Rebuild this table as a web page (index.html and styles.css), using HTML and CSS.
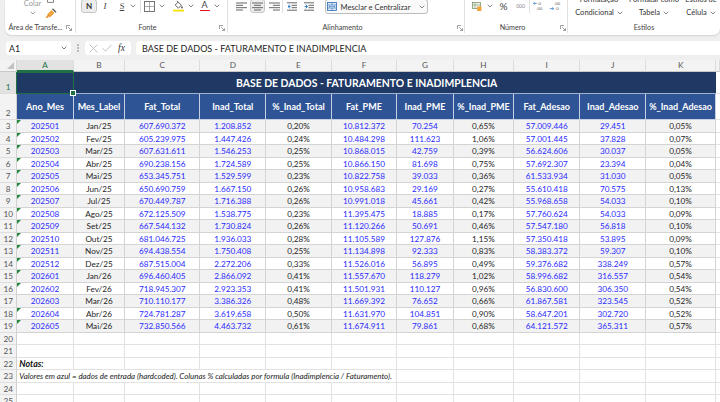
FILE: index.html
```html
<!DOCTYPE html>
<html lang="pt-BR">
<head>
<meta charset="utf-8">
<title>Base de Dados</title>
<link rel="stylesheet" href="styles.css">
</head>
<body>
<div class="app">
  <div class="ribbon">
    <div class="grp g-clip">
      <div class="top">
        <div class="paste ml21"><span class="paste-txt">Colar</span><svg class="chev pchev" viewBox="0 0 6 4" width="6" height="4"><path d="M.7 .7 3 3 5.3 .7" fill="none" stroke="#888" stroke-width=".8"/></svg></div>
        <div class="cliptools ml6">
          <svg width="10" height="3" viewBox="0 0 10 3"><path d="M1.5 0V2.4H7.5V0" fill="none" stroke="#666" stroke-width=".8"/></svg>
          <svg class="brush" width="12" height="11" viewBox="0 0 12 11"><path d="M7.5 .8 11 4.3" stroke="#555" stroke-width="1.3"/><path d="M3 5.5 6.6 2 9.5 4.9 6 8.4Z" fill="#f2a23a"/><path d="M3 5.5 .6 10.2 6 8.4Z" fill="#e68a1e"/><path d="M2.5 7.5 4 9" stroke="#fff" stroke-width=".5"/></svg>
        </div>
      </div>
      <div class="lbl-row"><span class="lbl">Área de Transfe...</span><svg class="launch mr3" viewBox="0 0 6 6" width="6" height="6"><path d="M.5 4V.5H4" fill="none" stroke="#777" stroke-width=".7"/><path d="M2.2 2.2 5.5 5.5M5.5 3.2V5.5H3.2" fill="none" stroke="#777" stroke-width=".7"/></svg></div>
    </div>

    <div class="grp g-font">
      <div class="top">
        <div class="it btn-n ml5">N</div>
        <div class="it w10 ml3 t-i">I</div>
        <div class="it w10 ml7 t-s">S</div>
        <div class="it w8 ml2"><svg class="chev" viewBox="0 0 6 4" width="6" height="4"><path d="M.7 .7 3 3 5.3 .7" fill="none" stroke="#666" stroke-width=".8"/></svg></div>
        <div class="it w7"><span class="vsep"></span></div>
        <div class="it w11"><svg width="11" height="11" viewBox="0 0 11 11"><rect x=".5" y=".5" width="10" height="10" fill="none" stroke="#666" stroke-width=".9"/><path d="M5.5 .5V10.5M.5 5.5H10.5" stroke="#888" stroke-width=".7"/></svg></div>
        <div class="it w8 ml3"><svg class="chev" viewBox="0 0 6 4" width="6" height="4"><path d="M.7 .7 3 3 5.3 .7" fill="none" stroke="#666" stroke-width=".8"/></svg></div>
        <div class="it w11 ml7"><svg width="11" height="12" viewBox="0 0 11 12"><path d="M2.2 5 5.2 2 8.4 5.2 5.4 8.2Z" fill="none" stroke="#555" stroke-width=".9"/><path d="M3.8 .8 5.4 2.4" stroke="#555" stroke-width=".9"/><path d="M9 5.8c.6 1 .9 1.4.9 1.8a.9.9 0 0 1-1.8 0c0-.4.3-.8.9-1.8z" fill="#555"/><rect x="0" y="9.7" width="11" height="1.8" fill="#f3e100"/></svg></div>
        <div class="it w8 ml3"><svg class="chev" viewBox="0 0 6 4" width="6" height="4"><path d="M.7 .7 3 3 5.3 .7" fill="none" stroke="#666" stroke-width=".8"/></svg></div>
        <div class="it w11 ml4 fcol"><span class="fa">A</span><span class="bar"></span></div>
        <div class="it w8 ml3"><svg class="chev" viewBox="0 0 6 4" width="6" height="4"><path d="M.7 .7 3 3 5.3 .7" fill="none" stroke="#666" stroke-width=".8"/></svg></div>
      </div>
      <div class="lbl-row"><span class="lbl">Fonte</span><svg class="launch mr2" viewBox="0 0 6 6" width="6" height="6"><path d="M.5 4V.5H4" fill="none" stroke="#777" stroke-width=".7"/><path d="M2.2 2.2 5.5 5.5M5.5 3.2V5.5H3.2" fill="none" stroke="#777" stroke-width=".7"/></svg></div>
    </div>

    <div class="grp g-align">
      <div class="top">
        <div class="it w11 ml8"><svg width="11" height="9" viewBox="0 0 11 9"><path d="M0 1H11M0 3.3H7M0 5.7H11M0 8H7" stroke="#555" stroke-width=".9"/></svg></div>
        <div class="it btn-c ml3"><svg width="11" height="9" viewBox="0 0 11 9"><path d="M0 1H11M2 3.3H9M0 5.7H11M2 8H9" stroke="#555" stroke-width=".9"/></svg></div>
        <div class="it w11 ml4"><svg width="11" height="9" viewBox="0 0 11 9"><path d="M0 1H11M4 3.3H11M0 5.7H11M4 8H11" stroke="#555" stroke-width=".9"/></svg></div>
        <div class="it w5"><span class="vsep"></span></div>
        <div class="it w10 ml2"><svg width="10" height="9" viewBox="0 0 10 9"><path d="M0 .8H10M4.5 3.3H10M4.5 5.7H10M0 8.2H10" stroke="#555" stroke-width=".9"/><path d="M3 2.6 1 4.5 3 6.4M1 4.5H3.6" fill="none" stroke="#1a73c8" stroke-width=".9"/></svg></div>
        <div class="it w10 ml7"><svg width="10" height="9" viewBox="0 0 10 9"><path d="M0 .8H10M4.5 3.3H10M4.5 5.7H10M0 8.2H10" stroke="#555" stroke-width=".9"/><path d="M1.6 2.6 3.6 4.5 1.6 6.4M.6 4.5H3.4" fill="none" stroke="#1a73c8" stroke-width=".9"/></svg></div>
        <div class="merge ml11">
          <svg width="10" height="9" viewBox="0 0 10 9"><rect x=".5" y=".5" width="9" height="8" fill="#dceaf8" stroke="#2f6fb5" stroke-width=".8"/><path d="M.5 3H9.5M.5 6H9.5M5 .5V3M5 6V8.5" stroke="#2f6fb5" stroke-width=".6"/><path d="M2 4.5H8M3 3.7 2 4.5 3 5.3M7 3.7 8 4.5 7 5.3" fill="none" stroke="#2f6fb5" stroke-width=".5"/></svg>
          <span class="merge-txt">Mesclar e Centralizar</span>
          <svg class="chev mchev" viewBox="0 0 6 4" width="6" height="4"><path d="M.7 .7 3 3 5.3 .7" fill="none" stroke="#666" stroke-width=".8"/></svg>
        </div>
      </div>
      <div class="lbl-row"><span class="lbl">Alinhamento</span><svg class="launch mr1" viewBox="0 0 6 6" width="6" height="6"><path d="M.5 4V.5H4" fill="none" stroke="#777" stroke-width=".7"/><path d="M2.2 2.2 5.5 5.5M5.5 3.2V5.5H3.2" fill="none" stroke="#777" stroke-width=".7"/></svg></div>
    </div>

    <div class="grp g-num">
      <div class="top">
        <div class="it w10 ml7"><svg width="10" height="9" viewBox="0 0 10 9"><rect x=".5" y=".5" width="8" height="6" fill="#eef2e8" stroke="#6f8a62" stroke-width=".7"/><path d="M.5 3H8.5M3 .5V6.5" stroke="#6f8a62" stroke-width=".5"/><rect x="5" y="4.5" width="4.5" height="4.5" rx=".8" fill="#f2a33a"/></svg></div>
        <div class="it w8 ml4"><svg class="chev" viewBox="0 0 6 4" width="6" height="4"><path d="M.7 .7 3 3 5.3 .7" fill="none" stroke="#666" stroke-width=".8"/></svg></div>
        <div class="it w9 ml5 pct">%</div>
        <div class="it w11 ml7 k000">000</div>
        <div class="it w6"><span class="vsep"></span></div>
        <div class="it w10 ml1"><svg width="10" height="10" viewBox="0 0 10 10"><text x="4.2" y="4" font-size="4.4" fill="#555" font-family="Liberation Sans, sans-serif">.0</text><text x="3" y="9.4" font-size="4.4" fill="#555" font-family="Liberation Sans, sans-serif">.00</text><path d="M3.8 2.4H.6M1.8 1.2.6 2.4 1.8 3.6" stroke="#1a73c8" fill="none" stroke-width=".7"/></svg></div>
        <div class="it w12 ml6"><svg width="12" height="10" viewBox="0 0 12 10"><text x="5" y="4" font-size="4.4" fill="#555" font-family="Liberation Sans, sans-serif">.00</text><text x="6" y="9.4" font-size="4.4" fill="#555" font-family="Liberation Sans, sans-serif">.0</text><path d="M.8 7.6H4.6M3.4 6.4 4.6 7.6 3.4 8.8" stroke="#1a73c8" fill="none" stroke-width=".7"/></svg></div>
      </div>
      <div class="lbl-row"><span class="lbl">Número</span><svg class="launch mr1" viewBox="0 0 6 6" width="6" height="6"><path d="M.5 4V.5H4" fill="none" stroke="#777" stroke-width=".7"/><path d="M2.2 2.2 5.5 5.5M5.5 3.2V5.5H3.2" fill="none" stroke="#777" stroke-width=".7"/></svg></div>
    </div>

    <div class="grp g-sty">
      <div class="top">
        <div class="sty ml7 w48"><div>Formatação</div><div>Condicional <svg class="chev" viewBox="0 0 6 4" width="6" height="4"><path d="M.7 .7 3 3 5.3 .7" fill="none" stroke="#666" stroke-width=".8"/></svg></div></div>
        <div class="sty ml5 w52"><div>Formatar como</div><div>Tabela <svg class="chev" viewBox="0 0 6 4" width="6" height="4"><path d="M.7 .7 3 3 5.3 .7" fill="none" stroke="#666" stroke-width=".8"/></svg></div></div>
        <div class="sty ml3 w36"><div>Estilos de</div><div>Célula <svg class="chev" viewBox="0 0 6 4" width="6" height="4"><path d="M.7 .7 3 3 5.3 .7" fill="none" stroke="#666" stroke-width=".8"/></svg></div></div>
      </div>
      <div class="lbl-row"><span class="lbl">Estilos</span></div>
    </div>
  </div>

  <div class="fbar">
    <div class="namebox"><span>A1</span><svg class="chev" viewBox="0 0 6 4" width="6" height="4"><path d="M.7 .7 3 3 5.3 .7" fill="none" stroke="#555" stroke-width=".8"/></svg></div>
    <div class="dots"><svg width="2" height="8" viewBox="0 0 2 8"><circle cx="1" cy="1" r=".8" fill="#777"/><circle cx="1" cy="4" r=".8" fill="#777"/><circle cx="1" cy="7" r=".8" fill="#777"/></svg></div>
    <div class="fxbox">
      <svg class="fx-x" width="9" height="9" viewBox="0 0 9 9"><path d="M.5.5 8.5 8.5M8.5.5.5 8.5" stroke="#b4b4b4" stroke-width=".8"/></svg>
      <svg class="fx-ok" width="10" height="8" viewBox="0 0 10 8"><path d="M.5 4.2 3.5 7.2 9.5.7" fill="none" stroke="#b4b4b4" stroke-width=".8"/></svg>
      <span class="fx">fx</span>
    </div>
    <div class="finput">BASE DE DADOS - FATURAMENTO E INADIMPLENCIA</div>
  </div>

  <div class="sheet">
    <div class="r ch">
      <div class="corner"></div>
      <div class="hc sel-col">A</div><div class="hc">B</div><div class="hc">C</div><div class="hc">D</div><div class="hc">E</div><div class="hc">F</div><div class="hc">G</div><div class="hc">H</div><div class="hc">I</div><div class="hc">J</div><div class="hc">K</div><div class="hc"></div>
    </div>
    <div class="r t">
      <div class="rh bot sel-row">1</div>
      <div class="title">BASE DE DADOS - FATURAMENTO E INADIMPLENCIA<span class="sel"></span></div>
      <div class="c x"></div>
    </div>
    <div class="r h">
      <div class="rh bot">2</div>
      <div class="hd">Ano_Mes</div><div class="hd">Mes_Label</div><div class="hd">Fat_Total</div><div class="hd">Inad_Total</div><div class="hd">%_Inad_Total</div><div class="hd">Fat_PME</div><div class="hd">Inad_PME</div><div class="hd">%_Inad_PME</div><div class="hd">Fat_Adesao</div><div class="hd">Inad_Adesao</div><div class="hd">%_Inad_Adesao</div>
      <div class="c x"></div>
    </div>

    <div class="r d alt"><div class="rh">3</div><div class="c b m">202501</div><div class="c">Jan/25</div><div class="c b">607.690.372</div><div class="c b">1.208.852</div><div class="c">0,20%</div><div class="c b">10.812.372</div><div class="c b">70.254</div><div class="c">0,65%</div><div class="c b">57.009.446</div><div class="c b">29.451</div><div class="c">0,05%</div><div class="c x"></div></div>
    <div class="r d"><div class="rh">4</div><div class="c b m">202502</div><div class="c">Fev/25</div><div class="c b">605.239.975</div><div class="c b">1.447.426</div><div class="c">0,24%</div><div class="c b">10.484.298</div><div class="c b">111.623</div><div class="c">1,06%</div><div class="c b">57.001.445</div><div class="c b">37.828</div><div class="c">0,07%</div><div class="c x"></div></div>
    <div class="r d alt"><div class="rh">5</div><div class="c b m">202503</div><div class="c">Mar/25</div><div class="c b">607.631.611</div><div class="c b">1.546.253</div><div class="c">0,25%</div><div class="c b">10.868.015</div><div class="c b">42.759</div><div class="c">0,39%</div><div class="c b">56.624.606</div><div class="c b">30.037</div><div class="c">0,05%</div><div class="c x"></div></div>
    <div class="r d"><div class="rh">6</div><div class="c b m">202504</div><div class="c">Abr/25</div><div class="c b">690.238.156</div><div class="c b">1.724.589</div><div class="c">0,25%</div><div class="c b">10.866.150</div><div class="c b">81.698</div><div class="c">0,75%</div><div class="c b">57.692.307</div><div class="c b">23.394</div><div class="c">0,04%</div><div class="c x"></div></div>
    <div class="r d alt"><div class="rh">7</div><div class="c b m">202505</div><div class="c">Mai/25</div><div class="c b">653.345.751</div><div class="c b">1.529.599</div><div class="c">0,23%</div><div class="c b">10.822.758</div><div class="c b">39.033</div><div class="c">0,36%</div><div class="c b">61.533.934</div><div class="c b">31.030</div><div class="c">0,05%</div><div class="c x"></div></div>
    <div class="r d"><div class="rh">8</div><div class="c b m">202506</div><div class="c">Jun/25</div><div class="c b">650.690.759</div><div class="c b">1.667.150</div><div class="c">0,26%</div><div class="c b">10.958.683</div><div class="c b">29.169</div><div class="c">0,27%</div><div class="c b">55.610.418</div><div class="c b">70.575</div><div class="c">0,13%</div><div class="c x"></div></div>
    <div class="r d alt"><div class="rh">9</div><div class="c b m">202507</div><div class="c">Jul/25</div><div class="c b">670.449.787</div><div class="c b">1.716.388</div><div class="c">0,26%</div><div class="c b">10.991.018</div><div class="c b">45.661</div><div class="c">0,42%</div><div class="c b">55.968.658</div><div class="c b">54.033</div><div class="c">0,10%</div><div class="c x"></div></div>
    <div class="r d"><div class="rh">10</div><div class="c b m">202508</div><div class="c">Ago/25</div><div class="c b">672.125.509</div><div class="c b">1.538.775</div><div class="c">0,23%</div><div class="c b">11.395.475</div><div class="c b">18.885</div><div class="c">0,17%</div><div class="c b">57.760.624</div><div class="c b">54.033</div><div class="c">0,09%</div><div class="c x"></div></div>
    <div class="r d alt"><div class="rh">11</div><div class="c b m">202509</div><div class="c">Set/25</div><div class="c b">667.544.132</div><div class="c b">1.730.824</div><div class="c">0,26%</div><div class="c b">11.120.266</div><div class="c b">50.691</div><div class="c">0,46%</div><div class="c b">57.547.180</div><div class="c b">56.818</div><div class="c">0,10%</div><div class="c x"></div></div>
    <div class="r d"><div class="rh">12</div><div class="c b m">202510</div><div class="c">Out/25</div><div class="c b">681.046.725</div><div class="c b">1.936.033</div><div class="c">0,28%</div><div class="c b">11.105.589</div><div class="c b">127.876</div><div class="c">1,15%</div><div class="c b">57.350.418</div><div class="c b">53.895</div><div class="c">0,09%</div><div class="c x"></div></div>
    <div class="r d alt"><div class="rh">13</div><div class="c b m">202511</div><div class="c">Nov/25</div><div class="c b">694.438.554</div><div class="c b">1.750.408</div><div class="c">0,25%</div><div class="c b">11.134.898</div><div class="c b">92.333</div><div class="c">0,83%</div><div class="c b">58.383.372</div><div class="c b">59.307</div><div class="c">0,10%</div><div class="c x"></div></div>
    <div class="r d"><div class="rh">14</div><div class="c b m">202512</div><div class="c">Dez/25</div><div class="c b">687.515.004</div><div class="c b">2.272.206</div><div class="c">0,33%</div><div class="c b">11.526.016</div><div class="c b">56.895</div><div class="c">0,49%</div><div class="c b">59.376.682</div><div class="c b">338.249</div><div class="c">0,57%</div><div class="c x"></div></div>
    <div class="r d alt"><div class="rh">15</div><div class="c b m">202601</div><div class="c">Jan/26</div><div class="c b">696.460.405</div><div class="c b">2.866.092</div><div class="c">0,41%</div><div class="c b">11.557.670</div><div class="c b">118.279</div><div class="c">1,02%</div><div class="c b">58.996.682</div><div class="c b">316.557</div><div class="c">0,54%</div><div class="c x"></div></div>
    <div class="r d"><div class="rh">16</div><div class="c b m">202602</div><div class="c">Fev/26</div><div class="c b">718.945.307</div><div class="c b">2.923.353</div><div class="c">0,41%</div><div class="c b">11.501.931</div><div class="c b">110.127</div><div class="c">0,96%</div><div class="c b">56.830.600</div><div class="c b">306.350</div><div class="c">0,54%</div><div class="c x"></div></div>
    <div class="r d alt"><div class="rh">17</div><div class="c b">202603</div><div class="c">Mar/26</div><div class="c b">710.110.177</div><div class="c b">3.386.326</div><div class="c">0,48%</div><div class="c b">11.669.392</div><div class="c b">76.652</div><div class="c">0,66%</div><div class="c b">61.867.581</div><div class="c b">323.545</div><div class="c">0,52%</div><div class="c x"></div></div>
    <div class="r d"><div class="rh">18</div><div class="c b m">202604</div><div class="c">Abr/26</div><div class="c b">724.781.287</div><div class="c b">3.619.658</div><div class="c">0,50%</div><div class="c b">11.631.970</div><div class="c b">104.851</div><div class="c">0,90%</div><div class="c b">58.647.201</div><div class="c b">302.720</div><div class="c">0,52%</div><div class="c x"></div></div>
    <div class="r d alt"><div class="rh">19</div><div class="c b m">202605</div><div class="c">Mai/26</div><div class="c b">732.850.566</div><div class="c b">4.463.732</div><div class="c">0,61%</div><div class="c b">11.674.911</div><div class="c b">79.861</div><div class="c">0,68%</div><div class="c b">64.121.572</div><div class="c b">365.311</div><div class="c">0,57%</div><div class="c x"></div></div>

    <div class="r e"><div class="rh">20</div><div class="c"></div><div class="c"></div><div class="c"></div><div class="c"></div><div class="c"></div><div class="c"></div><div class="c"></div><div class="c"></div><div class="c"></div><div class="c"></div><div class="c"></div><div class="c x"></div></div>
    <div class="r e"><div class="rh">21</div><div class="c"></div><div class="c"></div><div class="c"></div><div class="c"></div><div class="c"></div><div class="c"></div><div class="c"></div><div class="c"></div><div class="c"></div><div class="c"></div><div class="c"></div><div class="c x"></div></div>
    <div class="r e"><div class="rh">22</div><div class="c note-h">Notas:</div><div class="c"></div><div class="c"></div><div class="c"></div><div class="c"></div><div class="c"></div><div class="c"></div><div class="c"></div><div class="c"></div><div class="c"></div><div class="c"></div><div class="c x"></div></div>
    <div class="r e"><div class="rh">23</div><div class="c note">Valores em azul = dados de entrada (hardcoded). Colunas % calculadas por formula (Inadimplencia / Faturamento).</div><div class="c"></div><div class="c"></div><div class="c"></div><div class="c"></div><div class="c"></div><div class="c x"></div></div>
    <div class="r e"><div class="rh">24</div><div class="c"></div><div class="c"></div><div class="c"></div><div class="c"></div><div class="c"></div><div class="c"></div><div class="c"></div><div class="c"></div><div class="c"></div><div class="c"></div><div class="c"></div><div class="c x"></div></div>
    <div class="r e"><div class="rh">25</div><div class="c"></div><div class="c"></div><div class="c"></div><div class="c"></div><div class="c"></div><div class="c"></div><div class="c"></div><div class="c"></div><div class="c"></div><div class="c"></div><div class="c"></div><div class="c x"></div></div>
  </div>
</div>
</body>
</html>
```

FILE: styles.css
```css
* { box-sizing: border-box; }
html, body { margin: 0; padding: 0; }
body {
  width: 720px;
  height: 402px;
  overflow: hidden;
  background: #efefef;
  font-family: Lato, "Liberation Sans", sans-serif;
  color: #262626;
}
.app { display: flex; flex-direction: column; height: 402px; }

/* ---------- ribbon ---------- */
.ribbon {
  height: 35px;
  margin-left: 5px;
  background: #fff;
  border-radius: 0 0 7px 7px;
  box-shadow: 0 1px 2px rgba(0,0,0,0.12);
  display: flex;
  overflow: hidden;
  flex-shrink: 0;
}
.grp {
  height: 33px;
  display: flex;
  flex-direction: column;
  border-right: 1px solid #e1e1e1;
  flex-shrink: 0;
}
.g-clip { width: 71px; }
.g-font { width: 152px; }
.g-align { width: 237px; }
.g-num { width: 103px; }
.g-sty { flex: 1; border-right: 0; }
.top { height: 23px; display: flex; align-items: flex-start; }
.lbl-row { height: 10px; display: flex; align-items: center; }
.lbl {
  flex: 1;
  text-align: center;
  font-size: 7.2px;
  line-height: 10px;
  color: #444;
  white-space: nowrap;
}
.launch { flex-shrink: 0; display: block; }
.mr1 { margin-right: 1px; }
.mr2 { margin-right: 2px; }
.mr3 { margin-right: 3px; }

.ml1 { margin-left: 1px; } .ml2 { margin-left: 2px; } .ml3 { margin-left: 3px; }
.ml4 { margin-left: 4px; } .ml5 { margin-left: 5px; } .ml6 { margin-left: 6px; }
.ml7 { margin-left: 7px; } .ml8 { margin-left: 8px; } .ml11 { margin-left: 11px; }
.ml21 { margin-left: 21px; }
.w5 { width: 5px; } .w6 { width: 6px; } .w7 { width: 7px; } .w8 { width: 8px; }
.w9 { width: 9px; } .w10 { width: 10px; } .w11 { width: 11px; } .w12 { width: 12px; }
.w36 { width: 36px; } .w48 { width: 48px; } .w52 { width: 52px; }

.it {
  height: 12px;
  display: flex;
  align-items: center;
  justify-content: center;
  flex-shrink: 0;
}
.chev { display: block; flex-shrink: 0; }
.vsep { width: 1px; height: 13px; background: #e1e1e1; }

.paste {
  width: 13px;
  display: flex;
  flex-direction: column;
  align-items: center;
  margin-top: -1.5px;
  flex-shrink: 0;
}
.paste-txt { font-size: 7.5px; line-height: 9px; color: #9a9a9a; white-space: nowrap; }
.pchev { margin-top: 3px; }
.cliptools { width: 12px; display: flex; flex-direction: column; align-items: center; flex-shrink: 0; }
.cliptools svg { display: block; }
.brush { margin-top: 5px; }

.btn-n {
  width: 16px;
  height: 14px;
  margin-top: -1px;
  border: 1px solid #c6c6c6;
  border-radius: 3px;
  background: #ededed;
  font-weight: 700;
  font-size: 8px;
  color: #333;
}
.t-i { font-family: "Liberation Serif", serif; font-style: italic; font-size: 9px; color: #444; }
.t-s { font-family: "Liberation Serif", serif; font-size: 8.5px; color: #444; text-decoration: underline; }
.fcol { flex-direction: column; justify-content: flex-start; }
.fa { font-size: 9px; line-height: 9.5px; color: #444; }
.bar { width: 10px; height: 1.8px; background: #e81123; }
.btn-c {
  width: 15px;
  height: 14px;
  margin-top: -1px;
  border: 1px solid #c6c6c6;
  border-radius: 3px;
  background: #ededed;
}
.merge {
  width: 103px;
  height: 15px;
  margin-top: -1px;
  border: 1px solid #bcbcbc;
  border-radius: 3px;
  background: #fafafa;
  display: flex;
  align-items: center;
  padding-left: 1px;
  flex-shrink: 0;
}
.merge svg { display: block; flex-shrink: 0; }
.merge-txt { margin-left: 3.5px; font-size: 7.6px; color: #333; white-space: nowrap; }
.mchev { margin-left: auto; margin-right: 2px; }
.pct { font-size: 10px; color: #444; }
.k000 { font-size: 5px; color: #888; }
.sty {
  flex-shrink: 0;
  margin-top: -6px;
  font-size: 7.5px;
  line-height: 12.5px;
  color: #333;
  text-align: center;
  white-space: nowrap;
}
.sty .chev { display: inline-block; vertical-align: middle; margin-left: 1px; }

/* ---------- formula bar ---------- */
.fbar {
  height: 14px;
  margin-top: 6px;
  margin-bottom: 4.5px;
  display: flex;
  flex-shrink: 0;
}
.namebox {
  margin-left: 6px;
  width: 65px;
  background: #fff;
  border-radius: 4px;
  display: flex;
  align-items: center;
  justify-content: space-between;
  padding: 0 4px 0 3px;
  font-size: 8.8px;
  color: #222;
}
.dots { width: 14px; display: flex; align-items: center; justify-content: center; }
.dots svg { display: block; }
.fxbox {
  width: 46px;
  background: #fff;
  border-radius: 4px;
  display: flex;
  align-items: center;
}
.fxbox svg { display: block; flex-shrink: 0; }
.fx-x { margin-left: 3.5px; }
.fx-ok { margin-left: 4.5px; }
.fx {
  margin-left: 6px;
  font-family: "Liberation Serif", serif;
  font-style: italic;
  font-size: 9.5px;
  color: #333;
}
.finput {
  margin-left: 5px;
  flex: 1;
  background: #fff;
  border-radius: 4px 0 0 4px;
  padding-left: 6px;
  font-size: 9px;
  color: #222;
  display: flex;
  align-items: center;
  white-space: nowrap;
}

/* ---------- sheet ---------- */
.sheet { flex: 1; background: #fff; overflow: hidden; }
.r {
  display: grid;
  grid-template-columns: 17.3px 56.4px 51.6px 75px 66px 65.4px 65.6px 56.4px 60.6px 66px 66px 69.7px 1fr;
}
.ch { height: 12.8px; background: #f3f3f3; }
.t { height: 22px; }
.h { height: 26.1px; }
.d, .e { height: 12.5px; }

.corner { position: relative; border-right: 1px solid #d6d6d6; border-bottom: 1px solid #c8c8c8; }
.corner::after {
  content: "";
  position: absolute;
  right: 2px;
  bottom: 2px;
  border-left: 7px solid transparent;
  border-bottom: 7px solid #c2c2c2;
}
.hc {
  display: flex;
  align-items: center;
  justify-content: center;
  font-size: 8.2px;
  color: #555;
  border-right: 1px solid #dcdcdc;
  border-bottom: 1px solid #c8c8c8;
}
.hc.sel-col { background: #e2e2e2; color: #1e7145; border-bottom: 2px solid #1e7145; }

.rh {
  display: flex;
  align-items: center;
  justify-content: center;
  background: #f3f3f3;
  border-right: 1px solid #d0d0d0;
  border-bottom: 1px solid #dedede;
  font-size: 8.2px;
  color: #555;
}
.rh.bot { align-items: flex-end; padding-bottom: 1px; }
.rh.sel-row { background: #e2e2e2; color: #1e7145; }

.title {
  grid-column: 2 / 13;
  position: relative;
  background: #1f3864;
  color: #fff;
  font-weight: 700;
  font-size: 10.4px;
  display: flex;
  align-items: center;
  justify-content: center;
  white-space: nowrap;
  border-bottom: 1px solid #9fb1d3;
}
.sel {
  position: absolute;
  left: -1px;
  top: -0.5px;
  width: 57.4px;
  height: 22.5px;
  border: 1.6px solid #1e7145;
}
.sel::after {
  content: "";
  position: absolute;
  right: -3px;
  bottom: -3px;
  width: 4px;
  height: 4px;
  background: #1e7145;
  border: 1px solid #fff;
}
.hd {
  background: #2f5496;
  color: #fff;
  font-weight: 700;
  font-size: 9px;
  display: flex;
  align-items: center;
  justify-content: center;
  white-space: nowrap;
  overflow: hidden;
  border-right: 1px solid #c5cfe3;
  border-bottom: 1px solid #c5cfe3;
}

.c {
  position: relative;
  display: flex;
  align-items: center;
  justify-content: center;
  white-space: nowrap;
  overflow: hidden;
  font-size: 8.2px;
  color: #262626;
  border-right: 1px solid #d4d4d4;
  border-bottom: 1px solid #d4d4d4;
}
.d.alt .c { background: #f2f2f2; }
.d .c.x, .t .c.x, .h .c.x { background: #fff; border-right: 0; border-bottom-color: #e2e2e2; }
.c.b { color: #2a2aff; }
.c.m::before {
  content: "";
  position: absolute;
  left: 0;
  top: 0;
  border-top: 4px solid #1e8a3a;
  border-right: 4px solid transparent;
}
.e .c { border-right-color: #e2e2e2; border-bottom-color: #e2e2e2; }
.e .c.x { border-right: 0; }
.note-h {
  justify-content: flex-start;
  padding-left: 2px;
  overflow: visible;
  font-weight: 700;
  font-style: italic;
  font-size: 8.8px;
  color: #111;
}
.note {
  grid-column: 2 / 8;
  justify-content: flex-start;
  padding-left: 2px;
  font-style: italic;
  font-size: 7.9px;
  color: #222;
}
```
